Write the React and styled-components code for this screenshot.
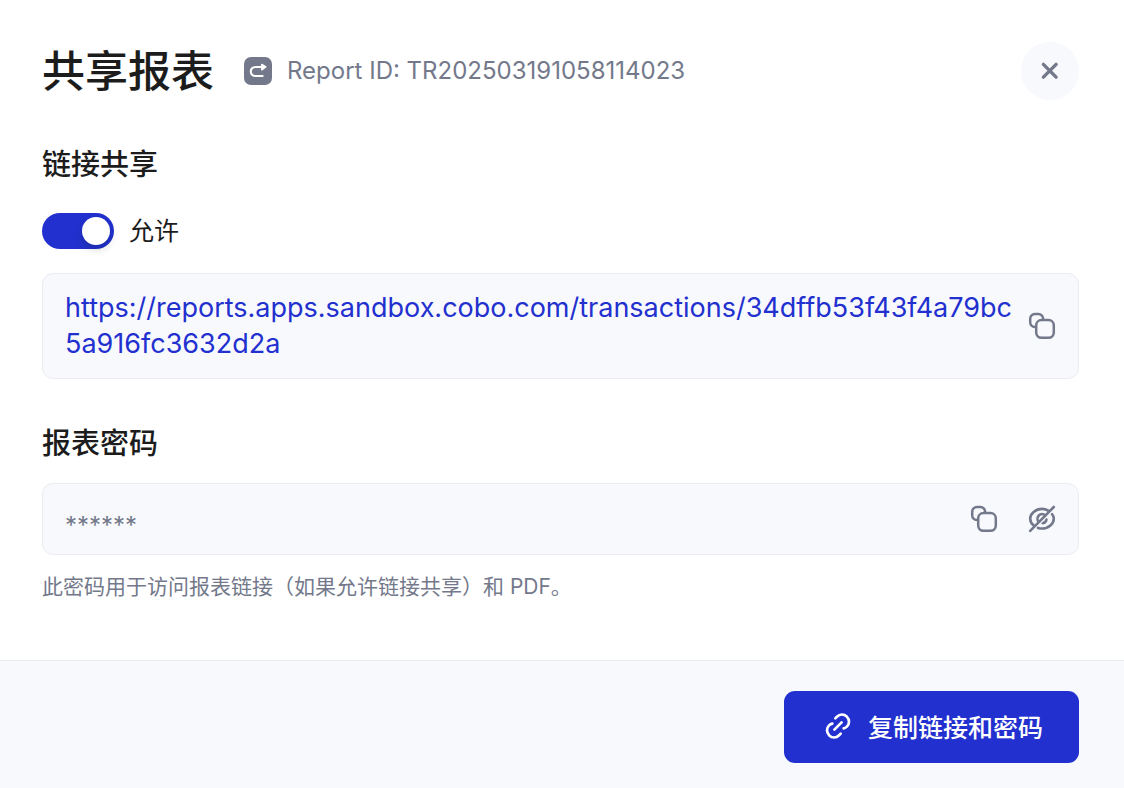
import { useState } from "react";
import styled, { createGlobalStyle } from "styled-components";

const SHARE_URL =
  "https://reports.apps.sandbox.cobo.com/transactions/34dffb53f43f4a79bc5a916fc3632d2a";

const App = () => {
  const [allowed, setAllowed] = useState(true);

  return (
    <>
      <GlobalStyle />
      <Dialog role="dialog" aria-labelledby="share-title">
        <Header>
          <Title id="share-title">共享报表</Title>
          <ReportBadge>
            <ReportIcon />
          </ReportBadge>
          <ReportId>Report ID: TR202503191058114023</ReportId>
          <CloseButton type="button" aria-label="关闭">
            <CloseIcon />
          </CloseButton>
        </Header>

        <Body>
          <SectionTitle>链接共享</SectionTitle>
          <SwitchLabel>
            <Switch
              type="checkbox"
              role="switch"
              checked={allowed}
              onChange={(e) => setAllowed(e.target.checked)}
            />
            允许
          </SwitchLabel>
          <LinkBox>
            <ShareLink href={SHARE_URL}>{SHARE_URL}</ShareLink>
            <IconButton type="button" aria-label="复制链接">
              <CopyIcon />
            </IconButton>
          </LinkBox>

          <PasswordTitle as="label" htmlFor="report-password">
            报表密码
          </PasswordTitle>
          <PasswordBox>
            <PasswordInput id="report-password" value="******" readOnly />
            <IconButton type="button" aria-label="复制密码">
              <CopyIcon />
            </IconButton>
            <IconButton type="button" aria-label="显示密码">
              <EyeOffIcon />
            </IconButton>
          </PasswordBox>
          <Hint>此密码用于访问报表链接（如果允许链接共享）和 PDF。</Hint>
        </Body>

        <Footer>
          <PrimaryButton type="button">
            <LinkIcon />
            复制链接和密码
          </PrimaryButton>
        </Footer>
      </Dialog>
    </>
  );
};

const ReportIcon = () => (
  <svg width="28" height="28" viewBox="0 0 28 28" fill="none">
    <path
      d="M18 10h-6.700a4.500 4.500 0 0 0 0 9h7.300"
      stroke="#fff"
      strokeWidth="2.200"
      strokeLinecap="round"
    />
    <path
      d="M17.800 7.400l4 2.600-4 2.800z"
      fill="#fff"
      stroke="#fff"
      strokeWidth="1.500"
      strokeLinejoin="round"
    />
  </svg>
);

const CloseIcon = () => (
  <svg width="28" height="28" viewBox="0 0 28 28" fill="none">
    <path
      d="M7.400 7.400l12.700 12.700M20.100 7.400L7.400 20.100"
      stroke="#73798b"
      strokeWidth="3.400"
      strokeLinecap="round"
    />
  </svg>
);

const CopyIcon = () => (
  <svg width="28" height="28" viewBox="0 0 28 28" fill="none">
    <g stroke="#73798b" strokeWidth="2.500" strokeLinecap="round">
      <rect x="8.200" y="8" width="17.600" height="17.800" rx="5.300" />
      <path d="M15.100 7.700V6.700A4.700 4.700 0 0 0 10.400 2H6.900A4.700 4.700 0 0 0 2.200 6.700v3.500a4.700 4.700 0 0 0 4.700 4.700h1" />
    </g>
  </svg>
);

const EyeOffIcon = () => (
  <svg width="28" height="28" viewBox="0 0 28 28" fill="none">
    <g stroke="#73798b" strokeWidth="2.600" strokeLinecap="round">
      <path d="M25.800 2L2.200 25.800" />
      <path d="M20.700 5.900C18.800 4.700 16.500 3.900 14 3.900 7.400 3.900 2.200 8.700 2.200 13.700c0 2.700 1.400 5.100 3.600 6.800" />
      <path d="M24 9.200c1.200 1.300 1.800 2.900 1.800 4.500 0 5-5.200 9.800-11.800 9.800-1.400 0-2.800-.2-4-.6" />
      <path d="M17.200 10.500a4.500 4.500 0 0 0-6.400 6.400" />
      <path d="M18.500 14.600a4.600 4.600 0 0 1-3.700 3.700" />
    </g>
  </svg>
);

const LinkIcon = () => (
  <svg width="26" height="26" viewBox="0 0 26 26" fill="none">
    <g stroke="#fff" strokeWidth="2.700" strokeLinecap="round">
      <path d="M9.400 16.600l7.200-7.200" />
      <path d="M10.300 5.400l1.600-1.600c2.900-2.900 7-2.900 9.900-.2 2.900 2.900 2.900 7.200.1 10-.9.900-1.900 1.500-3.200 1.800" />
      <path d="M7.300 10.600c-1.200.3-2.300.9-3.200 1.800-2.800 2.800-2.800 7.100.1 10 2.900 2.700 7 2.700 9.900-.2l1.600-1.600" />
    </g>
  </svg>
);

const GlobalStyle = createGlobalStyle`
  * {
    box-sizing: border-box;
  }

  body {
    margin: 0;
    background-color: #fff;
    color: #1c1c1c;
    font-family: Inter, "Noto Sans CJK SC", sans-serif;
  }

  button,
  input {
    font-family: inherit;
  }

  svg {
    display: block;
    flex: none;
  }
`;

const Dialog = styled.main`
  display: flex;
  flex-direction: column;
  min-height: 100vh;
`;

const Header = styled.header`
  display: flex;
  align-items: center;
  padding: 41px 45px 0 42px;
`;

const Title = styled.h1`
  margin: 0 30px 0 0;
  font-size: 43px;
  font-weight: 500;
  line-height: 60px;
`;

const ReportBadge = styled.span`
  border-radius: 7px;
  background-color: #73798b;
`;

const ReportId = styled.span`
  margin-left: 15px;
  color: #73798b;
  font-size: 24px;
  line-height: 36px;
`;

const CloseButton = styled.button`
  display: flex;
  align-items: center;
  justify-content: center;
  width: 58px;
  height: 58px;
  margin-left: auto;
  padding: 0;
  border: none;
  border-radius: 50%;
  background-color: #f8f9fd;
  cursor: pointer;
`;

const Body = styled.section`
  flex: 1;
  padding: 42px 45px 55px 42px;
`;

const SectionTitle = styled.h2`
  display: block;
  margin: 0;
  font-size: 29px;
  font-weight: 500;
  line-height: 44px;
`;

const PasswordTitle = styled(SectionTitle)`
  margin-top: 43px;
`;

const SwitchLabel = styled.label`
  display: flex;
  align-items: center;
  gap: 15px;
  width: fit-content;
  margin-top: 25px;
  font-size: 25px;
  line-height: 38px;
  cursor: pointer;
`;

const Switch = styled.input`
  display: flex;
  align-items: center;
  appearance: none;
  width: 72px;
  height: 36px;
  margin: 0;
  padding: 4px;
  border-radius: 18px;
  background-color: #c5c8d2;
  cursor: pointer;

  &::before {
    content: "";
    width: 28px;
    height: 28px;
    border-radius: 50%;
    background-color: #fff;
    box-shadow: 0 4px 8px rgba(0, 35, 11, 0.2);
  }

  &:checked {
    justify-content: flex-end;
    background-color: #2230cf;
  }
`;

const FieldBox = styled.div`
  display: flex;
  align-items: center;
  gap: 30px;
  border: 1px solid #ebecf1;
  border-radius: 11px;
  background-color: #f8f9fd;
`;

const LinkBox = styled(FieldBox)`
  gap: 14px;
  margin-top: 23px;
  padding: 16px 22px;
`;

const PasswordBox = styled(FieldBox)`
  height: 72px;
  margin-top: 17px;
  padding: 0 22px;
`;

const ShareLink = styled.a`
  flex: 1;
  min-width: 0;
  color: #2230cf;
  font-size: 27px;
  line-height: 36px;
  text-decoration: none;
  word-break: break-all;
`;

const PasswordInput = styled.input`
  flex: 1;
  min-width: 0;
  padding: 14px 0 0;
  border: none;
  outline: none;
  background: none;
  color: #73798b;
  font-size: 24px;
  line-height: 36px;
`;

const IconButton = styled.button`
  padding: 0;
  border: none;
  background: none;
  cursor: pointer;
`;

const Hint = styled.p`
  margin: 14px 0 0;
  color: #73798b;
  font-size: 21px;
  line-height: 36px;
`;

const Footer = styled.footer`
  display: flex;
  justify-content: flex-end;
  padding: 30px 45px 25px;
  border-top: 1px solid #ebecf1;
  background-color: #f8f9fd;
`;

const PrimaryButton = styled.button`
  display: flex;
  align-items: center;
  gap: 17px;
  height: 72px;
  padding: 0 36px 3px 41px;
  border: none;
  border-radius: 11px;
  background-color: #2230cf;
  color: #fff;
  font-size: 25px;
  font-weight: 500;
  cursor: pointer;
`;

export default App;
